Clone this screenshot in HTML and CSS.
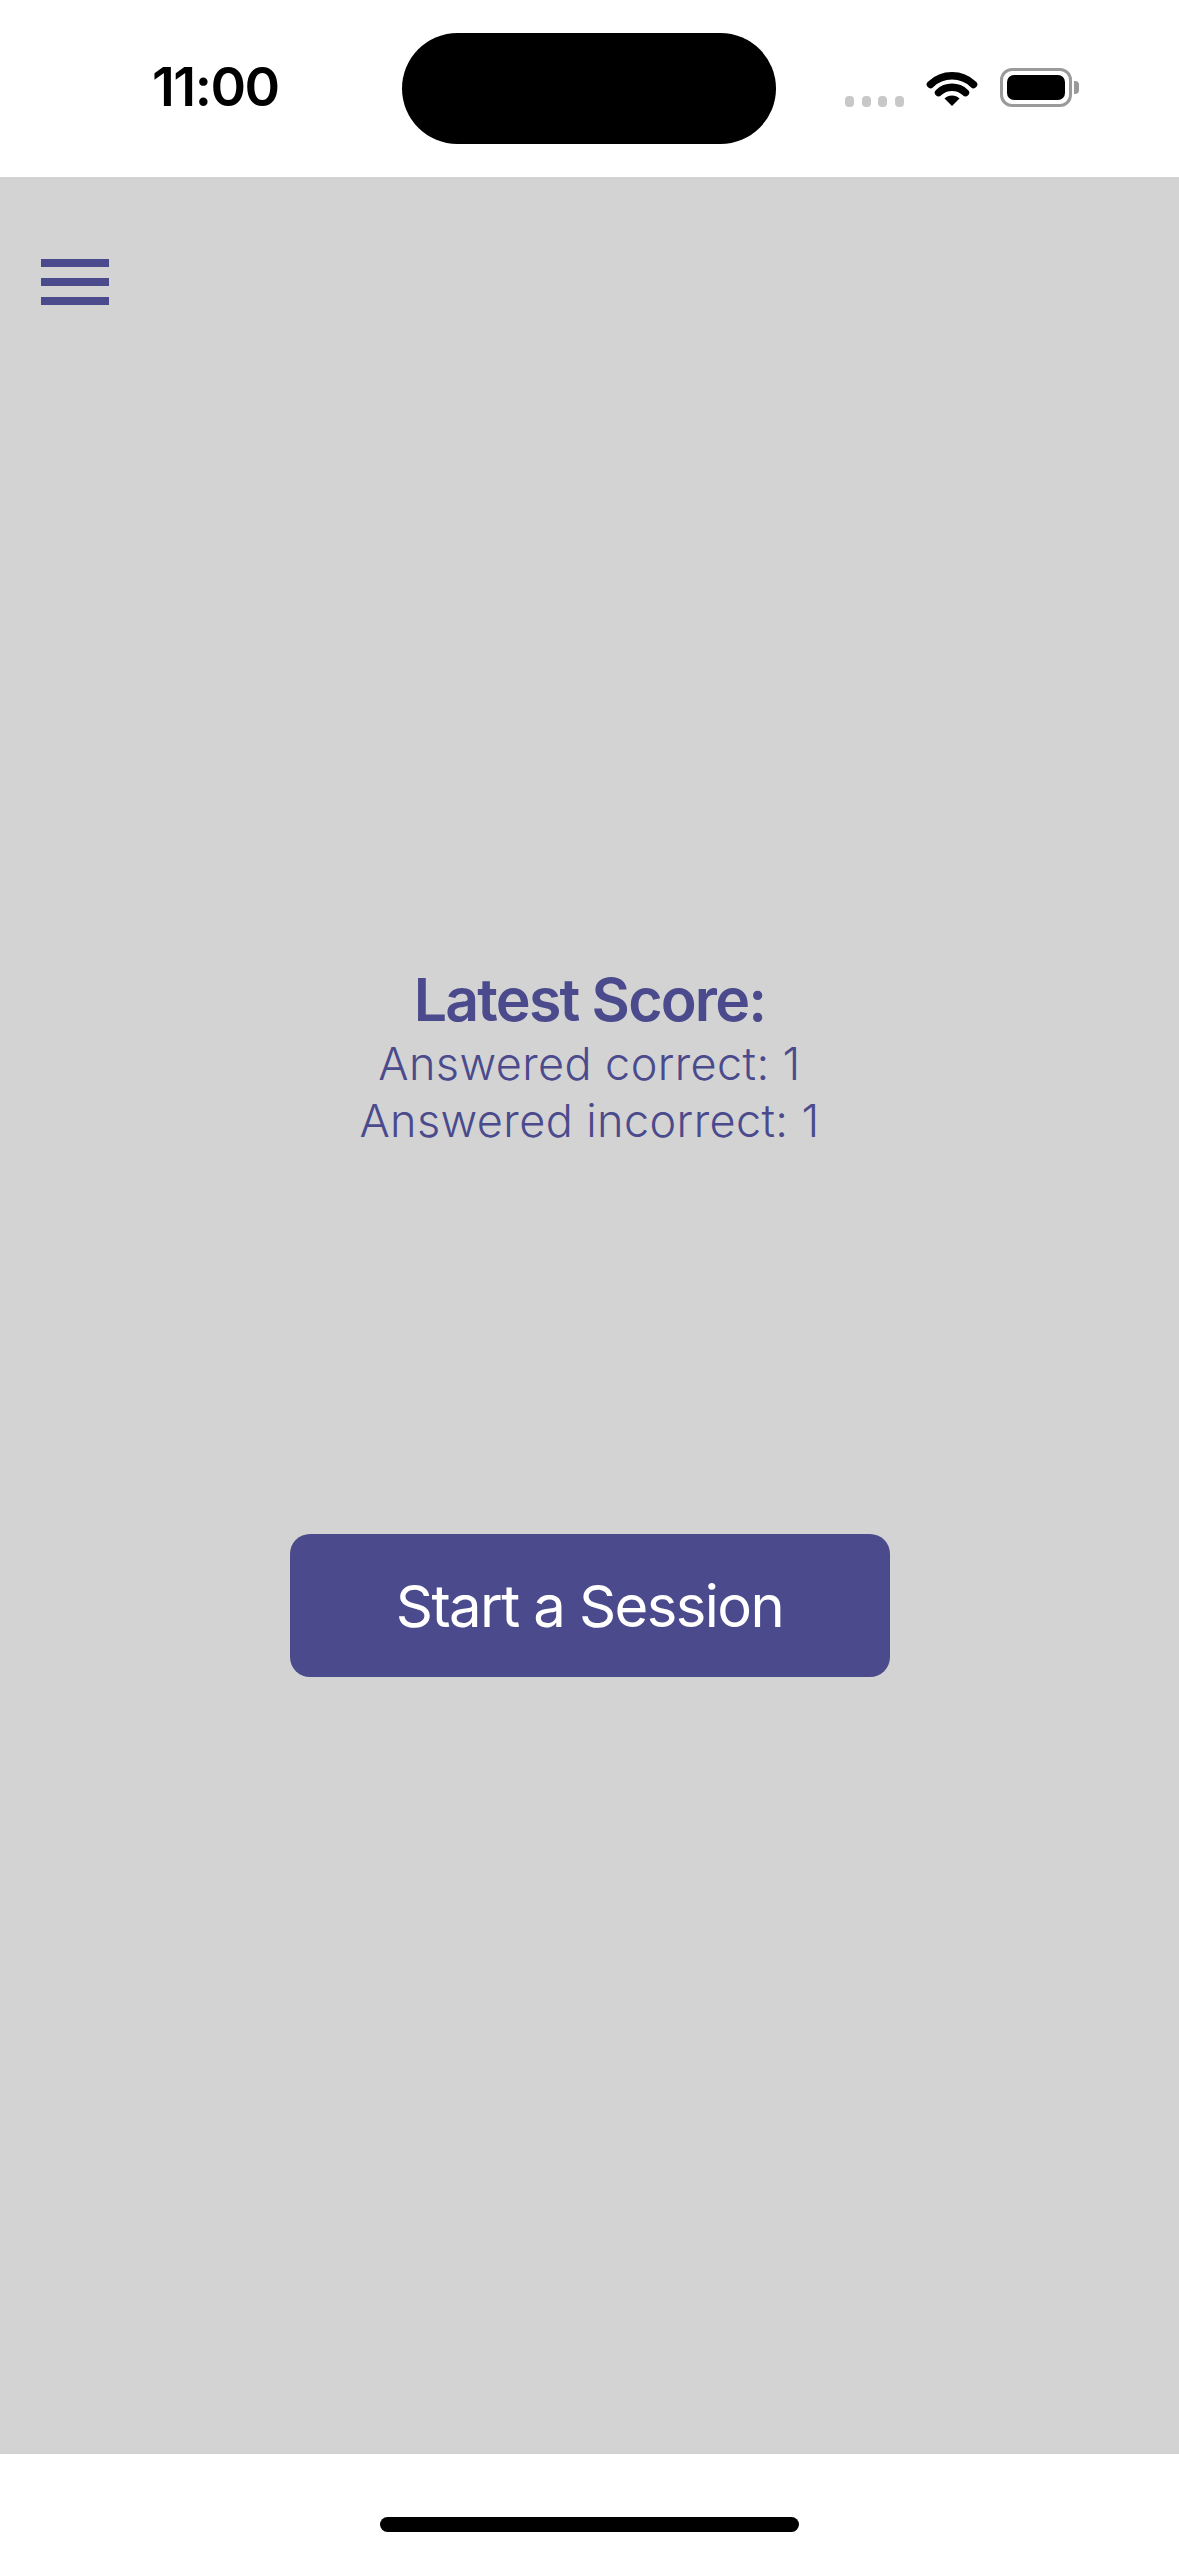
FILE: index.html
```html
<!DOCTYPE html>
<html lang="en">
<head>
<meta charset="utf-8">
<title>Latest Score</title>
<link rel="stylesheet" href="styles.css">
</head>
<body>
<div class="screen">
  <header class="status-bar">
    <div class="time">11:00</div>
    <div class="island"></div>
    <div class="status-icons">
      <div class="signal">
        <span class="dot"></span><span class="dot"></span><span class="dot"></span><span class="dot"></span>
      </div>
      <svg class="wifi" width="52" height="38" viewBox="0 0 52 38">
        <path d="M4.5 16.5 A31 31 0 0 1 47.5 16.5" fill="none" stroke="#000" stroke-width="7.5" stroke-linecap="round"/>
        <path d="M12.6 24.6 A19.5 19.5 0 0 1 39.4 24.6" fill="none" stroke="#000" stroke-width="7.5" stroke-linecap="round"/>
        <path d="M26 38 L18.5 30.5 A10.6 10.6 0 0 1 33.5 30.5 Z" fill="#000"/>
      </svg>
      <div class="battery">
        <div class="battery-body"><div class="battery-fill"></div></div>
        <div class="battery-nub"></div>
      </div>
    </div>
  </header>

  <main class="content">
    <button class="menu-button" aria-label="Menu">
      <span class="bar"></span>
      <span class="bar"></span>
      <span class="bar"></span>
    </button>

    <section class="score">
      <h1 class="score-title">Latest Score:</h1>
      <p class="score-line">Answered correct: 1</p>
      <p class="score-line">Answered incorrect: 1</p>
    </section>

    <button class="start-button">Start a Session</button>
  </main>

  <footer class="home-area">
    <div class="home-indicator"></div>
  </footer>
</div>
</body>
</html>
```

FILE: styles.css
```css
* {
  box-sizing: border-box;
}

html, body {
  margin: 0;
  padding: 0;
  background: #ffffff;
}

body {
  font-family: Inter, "Noto Sans", "Liberation Sans", sans-serif;
}

.screen {
  width: 1179px;
  height: 2556px;
  display: flex;
  flex-direction: column;
  overflow: hidden;
}

/* ---------- status bar ---------- */
.status-bar {
  height: 177px;
  flex: none;
  background: #ffffff;
  display: flex;
  align-items: flex-start;
}

.time {
  width: 250px;
  margin-left: 152px;
  margin-top: 60px;
  font-size: 54px;
  line-height: 54px;
  font-weight: 600;
  color: #000;
  letter-spacing: -1.5px;
}

.island {
  width: 374px;
  height: 111px;
  margin-top: 33px;
  border-radius: 56px;
  background: #000;
  flex: none;
}

.status-icons {
  margin-left: 69px;
  margin-top: 68px;
  height: 39px;
  display: flex;
  align-items: flex-end;
}

.signal {
  display: flex;
  gap: 7.5px;
  margin-bottom: 0;
}

.dot {
  width: 9px;
  height: 11px;
  border-radius: 4px;
  background: #c8c8c8;
}

.wifi {
  margin-left: 22px;
  margin-bottom: 1px;
  display: block;
}

.battery {
  margin-left: 22px;
  display: flex;
  align-items: center;
  height: 39px;
}

.battery-body {
  width: 72px;
  height: 39px;
  border: 3px solid #9a9a9a;
  border-radius: 12px;
  padding: 4px;
}

.battery-fill {
  width: 100%;
  height: 100%;
  background: #000;
  border-radius: 7px;
}

.battery-nub {
  width: 5px;
  height: 13px;
  margin-left: 2px;
  background: #9a9a9a;
  border-radius: 0 4px 4px 0;
}

/* ---------- content ---------- */
.content {
  flex: 1;
  background: #d3d3d3;
  display: flex;
  flex-direction: column;
  align-items: center;
}

.menu-button {
  align-self: flex-start;
  margin: 82px 0 0 41px;
  padding: 0;
  border: 0;
  background: none;
  display: flex;
  flex-direction: column;
  gap: 11px;
}

.bar {
  display: block;
  width: 68px;
  height: 8px;
  background: #4a4a8c;
}

.score {
  margin-top: 659px;
  text-align: center;
  color: #4a4a8c;
}

.score-title {
  margin: 0;
  font-size: 59px;
  line-height: 71px;
  font-weight: 600;
  letter-spacing: -1.8px;
}

.score-line {
  margin: 0;
  font-size: 45px;
  line-height: 57px;
  font-weight: 300;
  letter-spacing: 0.4px;
}

.start-button {
  margin-top: 385px;
  width: 600px;
  height: 143px;
  border: 0;
  border-radius: 20px;
  background: #4a4a8c;
  color: #ffffff;
  font-family: Inter, "Noto Sans", "Liberation Sans", sans-serif;
  font-size: 58px;
  font-weight: 400;
  letter-spacing: -1.6px;
  padding: 0;
}

/* ---------- home indicator ---------- */
.home-area {
  height: 102px;
  flex: none;
  background: #ffffff;
  display: flex;
  justify-content: center;
  padding-top: 63px;
}

.home-indicator {
  width: 419px;
  height: 15px;
  border-radius: 8px;
  background: #000;
}
```
